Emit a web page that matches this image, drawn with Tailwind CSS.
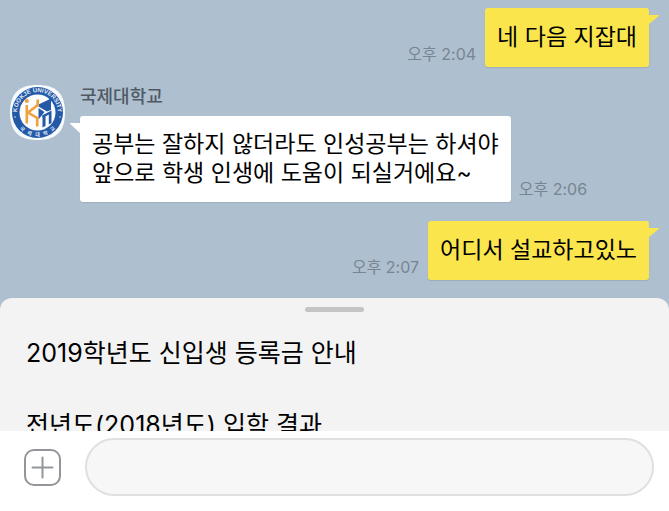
<!DOCTYPE html>
<html lang="ko">
<head>
    <meta charset="UTF-8">
    <meta name="viewport" content="width=device-width, initial-scale=1.0">
    <title>국제대학교</title>
    <script src="https://cdn.jsdelivr.net/npm/@tailwindcss/browser@4"></script>
</head>
<body class="flex h-screen flex-col overflow-hidden bg-[#aebfd0] font-['Inter','Noto_Sans_CJK_KR',sans-serif] text-[23px] leading-[29px] text-black">
    <main class="flex min-h-0 flex-1 flex-col">
        <section class="shrink-0 pt-2 pr-5 pb-[18px] pl-[10px]" aria-label="채팅">
            <!-- sent -->
            <div class="flex items-end justify-end gap-[9px]">
                <time class="pb-[3px] text-[16px] leading-5 text-[#788591]">오후 2:04</time>
                <div class="relative rounded-[3px] bg-[#fae54d] px-3 py-[15px] shadow-[0_1px_1px_#8f9a9c80]">
                    <p>네 다음 지잡대</p>
                    <svg class="absolute top-[7px] left-full h-[10px] w-[10px]" viewBox="0 0 10 10" aria-hidden="true"><path d="M0 0H9.500Q10.500 .3 9.700 1L0 9Z" fill="#fae54d"/></svg>
                </div>
            </div>

            <!-- received -->
            <div class="mt-[18px] flex items-start gap-[15px]">
                <svg class="h-[55px] w-[55px] shrink-0" viewBox="0 0 55 55" role="img" aria-label="국제대학교 로고">
                    <defs>
                        <path id="ring-top" d="M7.500 31.500A20.400 20.400 0 1 1 47.500 31.500"/>
                        <path id="ring-bottom" d="M4 33A24.200 24.200 0 0 0 51 33"/>
                    </defs>
                    <path d="M27.500 0C46 0 55 8 55 27.500S46 55 27.500 55 0 47 0 27.500 9 0 27.500 0Z" fill="#f7fafc"/>
                    <circle cx="27.500" cy="27.500" r="25.500" fill="#2359a7"/>
                    <circle cx="27.500" cy="27.500" r="18" fill="#fbfcfd"/>
                    <text class="font-['Liberation_Sans'] text-[6px] font-bold" fill="#e8eff8" text-anchor="middle"><textPath href="#ring-top" startOffset="50%">KOOKJE UNIVERSITY</textPath></text>
                    <text class="font-['Noto_Sans_CJK_KR'] text-[5px] font-bold" fill="#dce7f4" text-anchor="middle"><textPath href="#ring-bottom" startOffset="50%">국&nbsp;&nbsp;&nbsp;제&nbsp;&nbsp;&nbsp;대&nbsp;&nbsp;&nbsp;학&nbsp;&nbsp;&nbsp;교</textPath></text>
                    <circle cx="5" cy="32" r="0.700" fill="#fff"/>
                    <circle cx="50" cy="32" r="0.700" fill="#fff"/>
                    <path d="M28.500 19.500L41 13.500V25L37 26.500L28.500 21.500Z" fill="#2359a7"/>
                    <path d="M28.500 23L34.500 27L28.500 34.500Z" fill="#2359a7"/>
                    <path d="M32 30.500L41.500 25.500V38L38.800 39.500V29.500L35.500 31.500V41L32.500 42.500V33Z" fill="#2359a7"/>
                    <g fill="none" stroke="#efa13d" stroke-width="2.600">
                        <path d="M16.800 20V38.500M27.700 14.500V20L18 27.500L27.200 33V41.500"/>
                    </g>
                    <circle cx="16.800" cy="16" r="2.100" fill="#efa13d"/>
                </svg>
                <div>
                    <h1 class="text-[18px] leading-6 font-medium text-[#4f5a64]">국제대학교</h1>
                    <div class="mt-[7px] flex items-end gap-2">
                        <div class="relative rounded-[3px] bg-white px-3 py-[14px] shadow-[0_1px_1px_#8f9fb080]">
                            <p>공부는 잘하지 않더라도 인성공부는 하셔야<br>앞으로 학생 인생에 도움이 되실거에요~</p>
                            <svg class="absolute top-[7px] right-full h-[10px] w-[10px]" viewBox="0 0 10 10" aria-hidden="true"><path d="M10 0H.5Q-.5 .3 .3 1L10 10Z" fill="#fff"/></svg>
                        </div>
                        <time class="pb-[3px] text-[16px] leading-5 text-[#788591]">오후 2:06</time>
                    </div>
                </div>
            </div>

            <!-- sent -->
            <div class="mt-[19px] flex items-end justify-end gap-[9px]">
                <time class="pb-[3px] text-[16px] leading-5 text-[#788591]">오후 2:07</time>
                <div class="relative rounded-[3px] bg-[#fae54d] px-3 py-[15px] shadow-[0_1px_1px_#8f9a9c80]">
                    <p>어디서 설교하고있노</p>
                    <svg class="absolute top-[7px] left-full h-[10px] w-[10px]" viewBox="0 0 10 10" aria-hidden="true"><path d="M0 0H9.500Q10.500 .3 9.700 1L0 9Z" fill="#fae54d"/></svg>
                </div>
            </div>
        </section>

        <!-- quick reply sheet -->
        <section class="min-h-0 flex-1 overflow-hidden rounded-t-xl bg-[#f3f3f3] text-[25px]" aria-label="빠른 답장">
            <button class="mx-auto mt-[9px] block h-[5px] w-[59px] rounded-full bg-[#c4c4c4]" aria-label="목록 접기"></button>
            <ul class="mt-[27px] flex flex-col gap-[43px] px-[26px]">
                <li><a href="#">2019학년도 신입생 등록금 안내</a></li>
                <li><a href="#">전년도(2018년도) 입학 결과</a></li>
            </ul>
        </section>
    </main>

    <form class="flex h-20 shrink-0 items-center gap-6 bg-white pr-[15px] pb-2 pl-6">
        <button type="button" class="h-[37px] w-[37px] shrink-0" aria-label="첨부">
            <svg class="h-full w-full" viewBox="0 0 37 37" fill="none" stroke="#929599" stroke-width="2" aria-hidden="true">
                <rect x="1" y="1" width="35" height="35" rx="9"/>
                <path d="M18.500 8.500V28.500M8.500 18.500H28.500" stroke-linecap="round"/>
            </svg>
        </button>
        <input type="text" class="h-[58px] min-w-0 flex-1 rounded-full border-2 border-[#e0e0e0] bg-[#f7f7f7] px-6 outline-none" aria-label="메시지 입력">
    </form>
</body>
</html>
